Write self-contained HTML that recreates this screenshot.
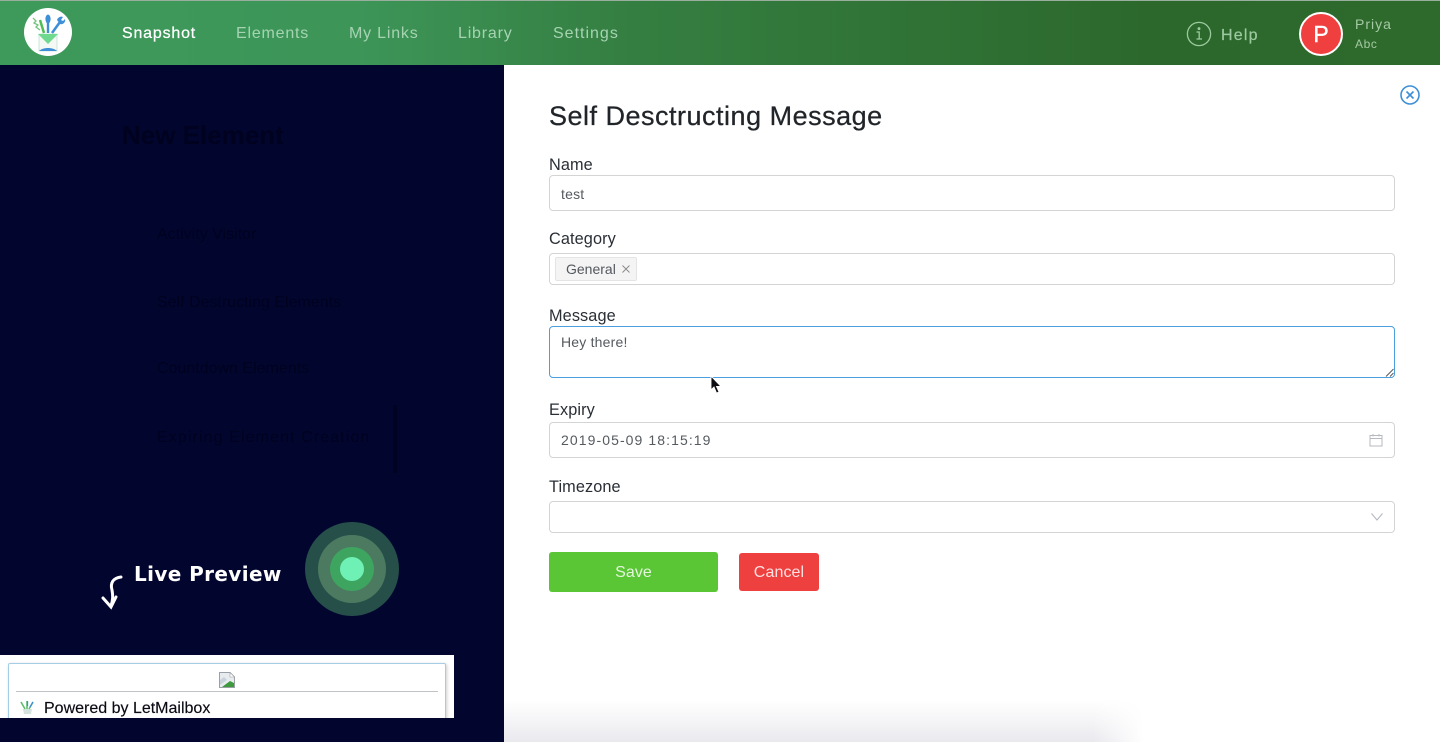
<!DOCTYPE html>
<html lang="en">
<head>
<meta charset="utf-8">
<title>Self Desctructing Message</title>
<style>
html,body{margin:0;padding:0;width:1440px;height:742px;overflow:hidden;background:#fff}
body{position:relative;font-family:"Liberation Sans",sans-serif;color:#212529}
.a{position:absolute;white-space:nowrap}
#hdr{left:0;top:0;width:1440px;height:65px;background:linear-gradient(90deg,#3d9a5b 0%,#3d9558 25%,#357f42 43%,#2c682c 80%,#2e6a2b 100%);border-top:1px solid #9aae9d;box-sizing:border-box}
.nav{top:25px;font-size:16px;line-height:18px;color:#a6d4b2;letter-spacing:.8px}
#left{left:0;top:65px;width:504px;height:677px;background:#02062f}
.ghost{color:#01021f;font-size:16px;line-height:18px}
.lbl{left:549px;font-size:16.300px;line-height:18px;color:#2a2f36;letter-spacing:.1px}
.field{left:549px;width:846px;box-sizing:border-box;border:1px solid #d4d4d4;border-radius:4px;background:#fff}
.val{left:561px;font-size:14px;line-height:16px;color:#555a5f;letter-spacing:.2px}
</style>
</head>
<body>
<div class="a" id="hdr"></div>

<div class="a" style="left:24px;top:8px;width:48px;height:48px;border-radius:50%;background:#fff"></div>
<svg class="a" style="left:24px;top:8px" width="48" height="48" viewBox="0 0 48 48">
  <path d="M9 10l3 3-2 2 4 2-2 2 4 3" fill="none" stroke="#72c47e" stroke-width="1.3"/>
  <path d="M16 12l4 13" stroke="#4fbf54" stroke-width="2.5"/>
  <path d="M24 25V14" stroke="#3f8fd6" stroke-width="2.4"/>
  <ellipse cx="24" cy="11" rx="2.6" ry="4.5" fill="#3f8fd6"/>
  <path d="M28 25l8-11" stroke="#3f8fd6" stroke-width="2.6"/>
  <path d="M33 12c1-3 4-4 6-3l-2 3 2 1 2-2c1 3-2 6-5 5z" fill="#3f8fd6"/>
  <path d="M15 26h18v17H15z" fill="#f4f9f6" stroke="#bfe3cf" stroke-width=".8"/>
  <path d="M14 26h20l-10 10z" fill="#6fd98f"/>
  <path d="M15 43c4-4 14-4 18 0z" fill="#3f8fd6"/>
</svg>

<div class="a nav" style="left:122px;color:#fff;-webkit-text-stroke:.25px #fff">Snapshot</div>
<div class="a nav" style="left:236px">Elements</div>
<div class="a nav" style="left:349px">My Links</div>
<div class="a nav" style="left:458px">Library</div>
<div class="a nav" style="left:553px;letter-spacing:1px">Settings</div>

<svg class="a" style="left:1186px;top:21px" width="26" height="26" viewBox="0 0 26 26" fill="none" stroke="#9ccaa0" stroke-width="1.3">
  <circle cx="13" cy="13" r="11.600"/>
  <path d="M10.500 11H13.200V18M10.500 18H16"/>
  <circle cx="13" cy="7.600" r=".8" fill="#9ccaa0"/>
</svg>
<div class="a" style="left:1221px;top:27px;font-size:16px;line-height:18px;color:#9ccaa0;letter-spacing:1.2px;-webkit-text-stroke:.2px #9ccaa0">Help</div>
<div class="a" style="left:1299px;top:12px;width:44px;height:44px;box-sizing:border-box;border:2px solid #fff;border-radius:50%;background:#ef3f3f;color:#fff;font-size:23px;line-height:40px;text-align:center;-webkit-text-stroke:.4px #fff">P</div>
<div class="a" style="left:1355px;top:16px;font-size:14px;line-height:16px;color:#a5c9a5;letter-spacing:1px">Priya</div>
<div class="a" style="left:1355px;top:37px;font-size:12px;line-height:14px;color:#a5c9a5;letter-spacing:.6px">Abc</div>

<div class="a" id="left"></div>
<div class="a" style="left:122px;top:120px;font-size:26px;line-height:30px;font-weight:700;color:#01021f">New Element</div>
<div class="a ghost" style="left:157px;top:226px">Activity Visitor</div>
<div class="a ghost" style="left:157px;top:294px">Self Destructing Elements</div>
<div class="a ghost" style="left:157px;top:360px">Countdown Elements</div>
<div class="a ghost" style="left:157px;top:429px;letter-spacing:1.100px">Expiring Element Creation</div>
<div class="a" style="left:393px;top:405px;width:4px;height:68px;background:#010322"></div>

<div class="a" style="left:134px;top:561px;font-family:'DejaVu Sans',sans-serif;font-weight:700;font-size:20px;line-height:26px;color:#fff;letter-spacing:.38px">Live Preview</div>
<svg class="a" style="left:98px;top:572px" width="30" height="40" viewBox="0 0 30 40" fill="none" stroke="#fff" stroke-width="3" stroke-linecap="round">
  <path d="M23 5C15 6 12 11 14 18C15 24 15 28 13 34"/>
  <path d="M5 26L13 35L18 25"/>
</svg>

<div class="a" style="left:305px;top:522px;width:94px;height:94px;border-radius:50%;background:#264f4a"></div>
<div class="a" style="left:318px;top:535px;width:68px;height:68px;border-radius:50%;background:#4c7a60"></div>
<div class="a" style="left:330px;top:547px;width:44px;height:44px;border-radius:50%;background:#3ea561"></div>
<div class="a" style="left:340px;top:557px;width:24px;height:24px;border-radius:50%;background:#6ff0b4"></div>

<div class="a" style="left:0;top:655px;width:454px;height:63px;background:#fff;overflow:hidden">
  <div class="a" style="left:8px;top:8px;width:438px;height:70px;box-sizing:border-box;border:1px solid #a5cde6;border-radius:2px;background:#fff;box-shadow:1px 1px 3px rgba(0,0,0,.2)"></div>
  <svg class="a" style="left:219px;top:17px" width="16" height="16" viewBox="0 0 16 16">
    <path d="M.5.5H11L15.500 5V15.500H.5z" fill="#e9ecef" stroke="#9aa0a6"/>
    <path d="M3 15L11 9L15 11V15z" fill="#3f9a3f"/>
    <path d="M1 8L5 5L8 8L1 13z" fill="#c9d3dc"/>
    <path d="M11 .5V5H15.500z" fill="#fff" stroke="#9aa0a6" stroke-width=".6"/>
  </svg>
  <div class="a" style="left:16px;top:36px;width:422px;height:1px;background:#bfc3c6"></div>
  <svg class="a" style="left:20px;top:45px" width="15" height="15" viewBox="0 0 15 15">
    <path d="M3 9h9l-1 5H4z" fill="#d5e3e0"/>
    <path d="M1 2l4 7M7 1v8M13 2L9 9" stroke="#5bbf6a" stroke-width="1.600"/>
    <path d="M7.500 1v5M13 2l-3 5" stroke="#3f8fd6" stroke-width="1.300"/>
  </svg>
  <div class="a" style="left:44px;top:45px;font-size:16px;line-height:18px;color:#0b0b14;-webkit-text-stroke:.15px #0b0b14">Powered by LetMailbox</div>
</div>

<div class="a" style="left:504px;top:700px;width:640px;height:42px;background:linear-gradient(180deg,#fff 0%,#f6f6f8 45%,#e9e9ee 100%);-webkit-mask-image:linear-gradient(90deg,#000 92%,transparent 100%);mask-image:linear-gradient(90deg,#000 92%,transparent 100%)"></div>

<div class="a" style="left:549px;top:100px;font-size:27px;line-height:32px;color:#212529;letter-spacing:.5px;-webkit-text-stroke:.25px #212529">Self Desctructing Message</div>
<svg class="a" style="left:1399px;top:84px" width="22" height="22" viewBox="0 0 22 22" fill="none" stroke="#3f8fd6" stroke-width="1.600">
  <circle cx="11" cy="11" r="9"/>
  <path d="M7.500 7.500l7 7M14.500 7.500l-7 7"/>
</svg>

<div class="a lbl" style="top:156px">Name</div>
<div class="a field" style="top:175px;height:36px"></div>
<div class="a val" style="top:186px">test</div>

<div class="a lbl" style="top:230px">Category</div>
<div class="a field" style="top:253px;height:32px"></div>
<div class="a" style="left:555px;top:257px;width:82px;height:24px;box-sizing:border-box;border:1px solid #e4e4e4;border-radius:2px;background:#f4f4f4"></div>
<div class="a" style="left:566px;top:261px;font-size:14px;line-height:16px;color:#53585e">General</div>
<svg class="a" style="left:621px;top:264px" width="10" height="10" viewBox="0 0 10 10" stroke="#888" stroke-width=".9"><path d="M1.500 1.500l7 7M8.500 1.500l-7 7"/></svg>

<div class="a lbl" style="top:307px">Message</div>
<div class="a field" style="top:326px;height:52px;border-color:#4a9fdf"></div>
<div class="a val" style="top:334px">Hey there!</div>
<svg class="a" style="left:1385px;top:368px" width="9" height="9" viewBox="0 0 9 9" stroke="#555" stroke-width=".9"><path d="M1 8.500L8.500 1M5 8.500L8.500 5"/></svg>

<svg class="a" style="left:708px;top:375px" width="14" height="20" viewBox="0 0 14 20">
  <path d="M3 1V15L6 12L8.500 18L11 17L8.500 11.500H13z" fill="#0d0d14" stroke="#fff" stroke-width=".9"/>
</svg>

<div class="a lbl" style="top:401px">Expiry</div>
<div class="a field" style="top:422px;height:36px"></div>
<div class="a val" style="top:432px;letter-spacing:1.080px">2019-05-09 18:15:19</div>
<svg class="a" style="left:1369px;top:433px" width="14" height="14" viewBox="0 0 14 14" fill="none" stroke="#b5bac0" stroke-width="1">
  <path d="M1 2.500H13V13H1zM1 5.500H13M4 1V3.500M10 1V3.500"/>
</svg>

<div class="a lbl" style="top:478px">Timezone</div>
<div class="a field" style="top:501px;height:32px"></div>
<svg class="a" style="left:1370px;top:512px" width="14" height="10" viewBox="0 0 14 10" fill="none" stroke="#b5bac0" stroke-width="1.100"><path d="M1.500 1.500L7 8L12.500 1.500"/></svg>

<div class="a" style="left:549px;top:552px;width:169px;height:40px;border-radius:3px;background:#5ac636;color:#e4f6dc;font-size:16px;line-height:41px;text-align:center;letter-spacing:.1px">Save</div>
<div class="a" style="left:739px;top:553px;width:80px;height:38px;border-radius:3px;background:#ef4040;color:#fde0e0;font-size:16px;line-height:39px;text-align:center;letter-spacing:.1px">Cancel</div>
</body>
</html>
